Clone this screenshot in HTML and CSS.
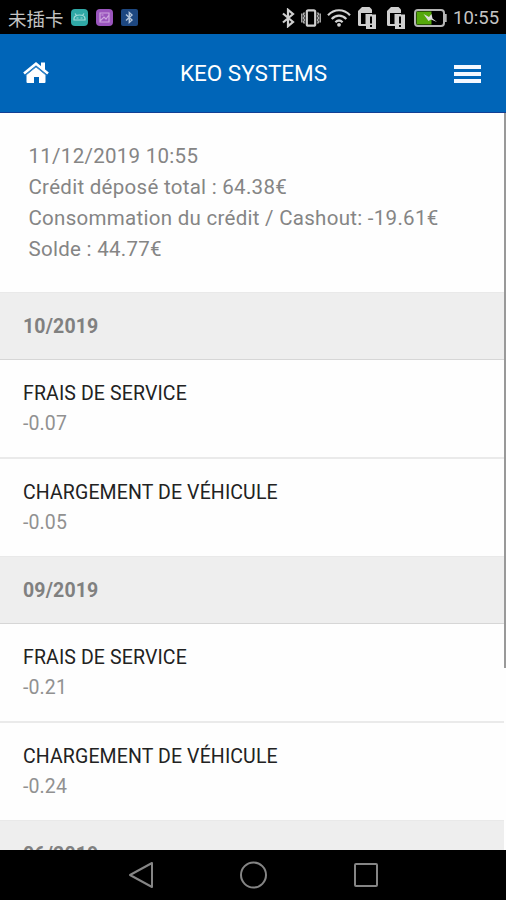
FILE: index.html
```html
<!DOCTYPE html>
<html lang="fr">

<head>
    <meta charset="UTF-8">
    <meta name="viewport" content="width=device-width, initial-scale=1.0">
    <title>KEO SYSTEMS</title>
    <link rel="stylesheet" href="styles.css">
</head>

<body>

    <!-- Status bar -->
    <div class="status-bar">
        <span class="carrier">未插卡</span>
        <div class="notifications">
            <svg width="17" height="17" viewBox="0 0 17 17">
                <rect width="17" height="17" rx="4" fill="#2fa8a6" />
                <path d="M3 11V9.500a5.500 3.500 0 0 1 11 0V11zM4 4.500l1.500 2M13 4.500l-1.500 2" fill="none" stroke="#a5dcda" stroke-width="1.200" />
                <path d="M5.500 9h2M9.500 9h2" stroke="#a5dcda" />
            </svg>
            <svg width="17" height="17" viewBox="0 0 17 17">
                <rect width="17" height="17" rx="4" fill="#9a55bd" />
                <path d="M4 4h9v9H4zM4 12l4-4 2 2 3-4M5.500 6h2" fill="none" stroke="#cda6e0" stroke-width="1.200" />
            </svg>
            <svg width="17" height="17" viewBox="0 0 17 17">
                <rect width="17" height="17" rx="2" fill="#1d4780" />
                <path d="M5 5.500l6 5.500-2.700 2.500v-10L11 6l-6 5.500" fill="none" stroke="#b5c6da" stroke-width="1.400" />
            </svg>
        </div>
        <div class="indicators">
            <svg class="bluetooth" width="14" height="20" viewBox="0 0 14 20">
                <path d="M2 5.500l10 8.500-5 4.200V1.800L12 6 2 14.500" fill="none" stroke="#cfcfcf" stroke-width="2.200" />
            </svg>
            <svg class="vibrate" width="20" height="18" viewBox="0 0 20 18">
                <rect x="5.800" y="1.300" width="8.400" height="15.400" rx="1.500" fill="none" stroke="#cfcfcf" stroke-width="2.200" />
                <path d="M3.500 3.500L2.500 5l1 2-1 2 1 2-1 2 1 1.500M16.500 3.500l1 1.500-1 2 1 2-1 2 1 2-1 1.500M.8 4.500v9M19.200 4.500v9" fill="none" stroke="#b5b5b5" stroke-width="1.400" />
            </svg>
            <svg class="wifi" width="24" height="19" viewBox="0 0 24 19">
                <path d="M1 7.200C7.300.6 16.700.6 23 7.200M4.700 10.900c4.300-4.500 10.300-4.500 14.600 0M8.400 14.200c2.200-2.200 5-2.200 7.200 0" fill="none" stroke="#d2d2d2" stroke-width="2.200" />
                <circle cx="12" cy="16.800" r="1.900" fill="#d2d2d2" />
            </svg>
            <svg class="sim" width="20" height="24" viewBox="0 0 20 24">
                <path d="M5 1h7.500L15 3.500V20H2.500A1.500 1.500 0 0 1 1 18.500V5z" fill="#cfcfcf" />
                <path d="M4 7h11v1H8.500v10H4z" fill="#000" />
                <rect x="9" y="8.500" width="10" height="14.500" fill="#cfcfcf" />
                <path d="M14 10.500v7M14 19v2" stroke="#000" stroke-width="2" />
            </svg>
            <svg class="sim" width="20" height="24" viewBox="0 0 20 24">
                <path d="M5 1h7.500L15 3.500V20H2.500A1.500 1.500 0 0 1 1 18.500V5z" fill="#cfcfcf" />
                <path d="M4 7h11v1H8.500v10H4z" fill="#000" />
                <rect x="9" y="8.500" width="10" height="14.500" fill="#cfcfcf" />
                <path d="M14 10.500v7M14 19v2" stroke="#000" stroke-width="2" />
            </svg>
            <svg class="battery" width="33" height="18" viewBox="0 0 33 18">
                <rect x="1" y="1" width="29" height="16" rx="3" fill="#000" stroke="#b5b5b5" stroke-width="2" />
                <rect x="2.500" y="2.500" width="15" height="13" fill="#55a80b" />
                <path d="M31.700 5v8" stroke="#b5b5b5" stroke-width="2" />
                <path d="M9.500 5l5.500 3 2.500-3 1 4.500L23 13l-6-2.500-2.500 1.500z" fill="#dedede" />
            </svg>
            <span class="clock">10:55</span>
        </div>
    </div>

    <!-- Header -->
    <div class="header">
        <a class="home">
            <svg width="26" height="22" viewBox="0 0 26 22">
                <path d="M13 5.200l9.500 7.800V20a1 1 0 0 1-1 1H16v-6h-5v6H4.500a1 1 0 0 1-1-1v-7z" fill="#fff" />
                <path d="M1 11.600L13 1.700l12 9.900" fill="none" stroke="#fff" stroke-width="2.600" />
                <path d="M18 .5h4v8l-4-3.300z" fill="#fff" />
                <path d="M2.500 13.200L13 4.600l10.500 8.600" fill="none" stroke="#4d94cf" stroke-width=".8" />
            </svg>
        </a>
        <h1>KEO SYSTEMS</h1>
        <div class="menu">
            <span></span>
            <span></span>
            <span></span>
        </div>
    </div>

    <!-- Account history -->
    <div class="content">
        <div class="summary">
            <div>11/12/2019 10:55</div>
            <div>Crédit déposé total : 64.38€</div>
            <div>Consommation du crédit / Cashout: -19.61€</div>
            <div>Solde : 44.77€</div>
        </div>

        <div class="month">10/2019</div>
        <div class="item">
            <div class="name">FRAIS DE SERVICE</div>
            <div class="amount">-0.07</div>
        </div>
        <div class="item last">
            <div class="name">CHARGEMENT DE VÉHICULE</div>
            <div class="amount">-0.05</div>
        </div>

        <div class="month">09/2019</div>
        <div class="item">
            <div class="name">FRAIS DE SERVICE</div>
            <div class="amount">-0.21</div>
        </div>
        <div class="item last">
            <div class="name">CHARGEMENT DE VÉHICULE</div>
            <div class="amount">-0.24</div>
        </div>

        <div class="month">06/2019</div>
        <div class="scrollbar"></div>
    </div>

    <!-- Navigation bar -->
    <div class="nav-bar">
        <svg width="26" height="28" viewBox="0 0 26 28">
            <path d="M25 2v24L3 14z" fill="none" stroke="#858585" stroke-width="2" stroke-linejoin="round" />
        </svg>
        <svg width="28" height="28" viewBox="0 0 28 28">
            <circle cx="14.500" cy="14" r="12.500" fill="none" stroke="#858585" stroke-width="2" />
        </svg>
        <svg width="26" height="26" viewBox="0 0 26 26">
            <rect x="2" y="2" width="22" height="22" rx="1" fill="none" stroke="#858585" stroke-width="2" />
        </svg>
    </div>

</body>

</html>
```

FILE: styles.css
```css
* {
    box-sizing: border-box;
}

body {
    font-family: Roboto, "Noto Sans CJK SC", sans-serif;
    background: #fefefe;
    margin: 0;
    height: 900px;
    display: flex;
    flex-direction: column;
    overflow: hidden;
}

svg {
    display: block;
    flex-shrink: 0;
}

.status-bar {
    display: flex;
    align-items: center;
    height: 34px;
    padding: 1px 7px 0 8px;
    background: #000;
    color: #c4c4c4;
}

.carrier {
    font-family: "Noto Sans CJK SC", sans-serif;
    font-size: 18.500px;
    line-height: 34px;
}

.notifications {
    display: flex;
    gap: 8px;
    margin-left: 7px;
}

.indicators {
    display: flex;
    align-items: center;
    margin-left: auto;
}

.vibrate {
    margin-left: 6px;
}

.wifi {
    margin-left: 6px;
}

.sim {
    margin-left: 6px;
}

.sim + .sim {
    margin-left: 9px;
}

.battery {
    margin-left: 8px;
}

.clock {
    width: 46px;
    margin-left: 6px;
    font-size: 18.500px;
    line-height: 34px;
    white-space: nowrap;
}

.header {
    display: flex;
    align-items: center;
    justify-content: space-between;
    height: 79px;
    padding: 0 25px 0 23px;
    background: #0065b8;
    border-bottom: 1px solid #123f94;
    color: #fff;
}

.header h1 {
    margin: 0;
    padding-left: 4px;
    font-size: 22.500px;
    font-weight: 400;
}

.menu {
    display: flex;
    flex-direction: column;
    gap: 3px;
    width: 27px;
    padding-top: 1px;
}

.menu span {
    height: 4px;
    background: #f4f8ff;
}

.content {
    position: relative;
    flex: 1;
    overflow: hidden;
    padding-right: 2px;
}

.summary {
    height: 179px;
    padding: 28px 28px 0 28.500px;
    color: #858585;
    font-size: 20.500px;
    letter-spacing: 0.28px;
    line-height: 31px;
    white-space: nowrap;
}

.month {
    height: 68px;
    padding-left: 23px;
    background: #eee;
    border-top: 1px solid #e9e9e9;
    border-bottom: 1px solid #d6d6d6;
    color: #808080;
    font-size: 19.500px;
    font-weight: 700;
    letter-spacing: 0.15px;
    line-height: 68px;
}

.item {
    height: 99px;
    padding: 19px 23px 0;
    border-bottom: 2px solid #eaeaea;
    font-size: 19.500px;
    letter-spacing: 0.12px;
    line-height: 30px;
}

.item.last {
    height: 97px;
    border-bottom: none;
}

.name {
    color: #222;
}

.amount {
    color: #919191;
}

/* scroll indicator over the right edge */
.scrollbar {
    position: absolute;
    top: 0;
    right: 0;
    width: 2px;
    height: 555px;
    background: #999;
}

.nav-bar {
    display: flex;
    align-items: center;
    justify-content: center;
    gap: 86px;
    height: 50px;
    background: #000;
}
```
